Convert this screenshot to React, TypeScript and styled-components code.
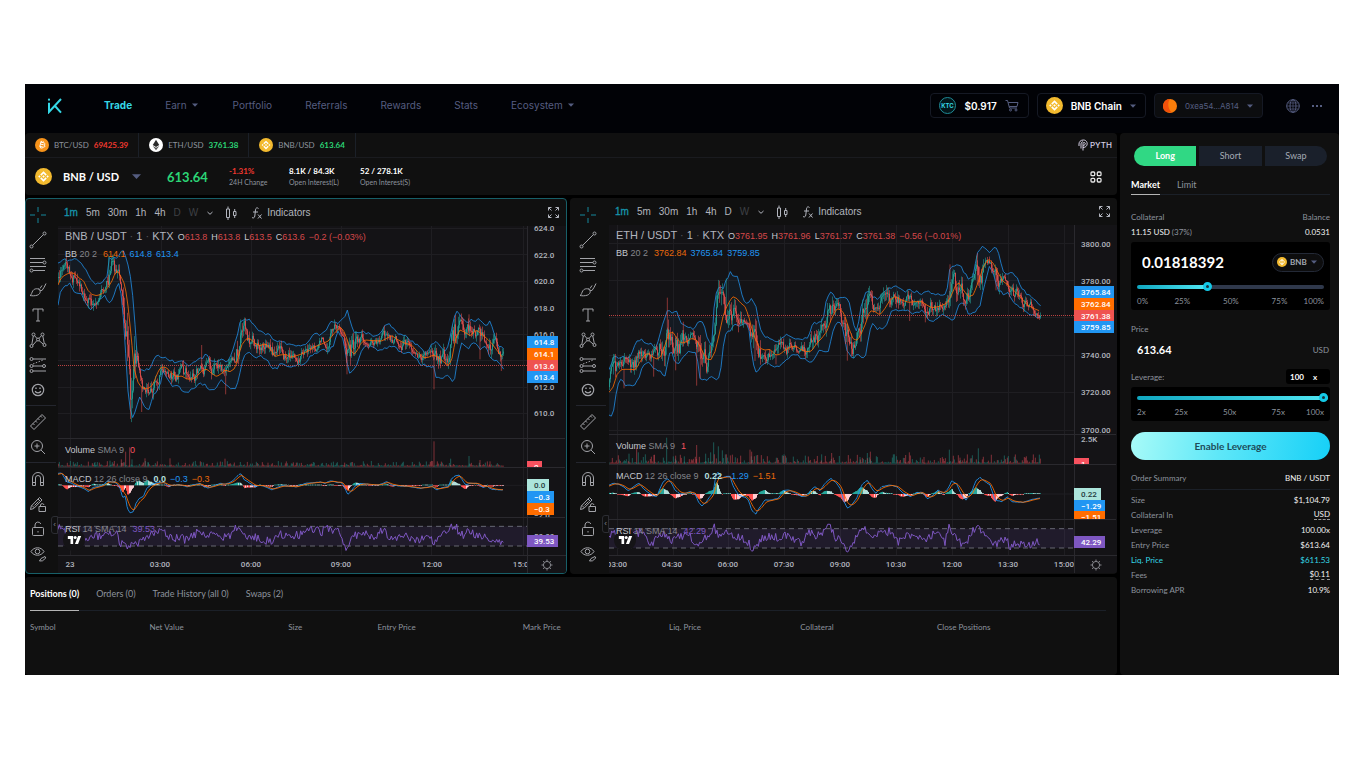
import React, { useState } from 'react';
import styled, { createGlobalStyle, css } from 'styled-components';

/* ---------- theme values ---------- */

const ui = "Lato, 'Open Sans', sans-serif";
const head = 'Inter, sans-serif';
const chartFont = "'Liberation Sans', Arial, sans-serif";
const axisFont = 'Roboto, sans-serif';

const c = {
  panel: '#101010',
  plot: '#141316',
  grid: '#1f1e22',
  line: '#2a292e',
  rule: '#1b2028',
  text: '#8d939d',
  green: '#2bd576',
  red: '#f0382f',
  up: '#26a69a',
  down: '#ef5350',
  blue: '#2196f3',
  orange: '#ff6d00',
  purple: '#7e57c2',
  mint: '#ace5dc',
  cyan: '#35d8e6',
  nav: '#555d80',
};

const GlobalStyle = createGlobalStyle`
  *, *::before, *::after { box-sizing: border-box; }
  body { margin: 0; background: #fff; }
  button, input, select { font: inherit; color: inherit; margin: 0; }
  button { background: none; border: 0; padding: 0; cursor: pointer; }
  svg { display: block; }
`;

/* ---------- series helpers ---------- */

type Pt = [number, number];

const seeded = (seed: number) => () => {
  seed = (seed + 0x6d2b79f5) | 0;
  let t = Math.imul(seed ^ (seed >>> 15), 1 | seed);
  t = (t + Math.imul(t ^ (t >>> 7), 61 | t)) ^ t;
  return ((t ^ (t >>> 14)) >>> 0) / 4294967296;
};

const pts = (dx: number, dy: number, s: string): Pt[] =>
  s.trim().split(/\s+/).map((p) => {
    const [x, y] = p.split(',').map(Number);
    return [x + dx, y + dy] as Pt;
  });

const at = (s: Pt[], x: number) => {
  if (x <= s[0][0]) return s[0][1];
  for (let i = 1; i < s.length; i++) {
    if (x <= s[i][0]) {
      const [x0, y0] = s[i - 1];
      const [x1, y1] = s[i];
      return x1 === x0 ? y1 : y0 + ((y1 - y0) * (x - x0)) / (x1 - x0);
    }
  }
  return s[s.length - 1][1];
};

const d = (s: Pt[]) => 'M' + s.map((p) => `${p[0].toFixed(1)} ${p[1].toFixed(1)}`).join('L');

const sample = (s: Pt[], end: number, noise = 0, seed = 1, step = 3): Pt[] => {
  const rnd = seeded(seed);
  const out: Pt[] = [];
  for (let x = 0; x <= end; x += step) out.push([x, at(s, x) + (rnd() - 0.5) * noise]);
  return out;
};

/* ---------- chart data ---------- */

type Tag = { y: number; h: number; w: number; text: string; fill: string; dark?: boolean };
type Pane = { top: number; height: number; labels: [number, string][]; tags: Tag[] };

interface ChartSpec {
  id: string;
  symbol: string;
  width: number;
  height: number;
  end: number;
  seed: number;
  gridX: number[];
  gridY: number[];
  priceY: number;
  mid: Pt[];
  upper: Pt[];
  lower: Pt[];
  spikes: [number, number][];
  volBase: number;
  volNoise: number;
  vols: [number, number, boolean][];
  zero: number;
  macd: Pt[];
  rsiBand: [number, number];
  rsi: Pt[];
  panes: Pane[];
  times: [number, string][];
  ohlc: [string, string][];
  change: string;
  bb: string[];
  vol: string;
  macdValues: string[];
  rsiValue: string;
  legendTops: number[];
  dayDim: boolean;
}

const bnb: ChartSpec = {
  id: 'bnb',
  symbol: 'BNB / USDT',
  width: 469,
  height: 329,
  end: 1337,
  seed: 11,
  gridX: [12, 103, 193, 283, 373, 465],
  gridY: [2, 28, 55, 81, 108, 134, 161, 187],
  priceY: 139,
  mid: [
    ...pts(-114, -93, '115,270 122,250 135,240 150,233 165,236 178,250 190,256 203,285 215,298 230,302 245,297 262,280 275,260 285,235 293,228 303,245 315,270 325,340 335,440 342,520 355,565 368,580 385,580 398,570 408,545 418,522 430,515 442,520 455,535 470,545 485,543 500,552 515,553 530,545 545,528 560,522 575,535 590,545 605,535 615,525 630,530 645,520 655,485 665,450 680,430 692,432 705,445 720,452 735,446 750,460 765,485 780,480 800,478'),
    ...pts(696, -93, '0,487 20,482 40,475 60,465 75,455 95,447 115,438 130,418 150,397 160,405 170,430 180,460 190,478 200,470 212,445 225,435 250,437 275,438 290,430 305,422 325,435 345,445 365,450 380,468 400,488 415,487 430,480 445,487 460,500 475,512 485,495 497,430 510,405 525,412 540,422 560,405 575,418 590,430 605,445 620,465 640,490'),
  ],
  upper: [
    ...pts(-114, -93, '115,205 130,193 145,196 160,192 180,200 195,222 210,248 220,265 235,262 250,262 265,235 268,190 285,190 300,185 307,155 315,180 325,215 335,265 342,340 348,440 355,520 370,525 390,520 400,500 412,475 425,490 440,488 460,500 475,500 490,500 500,512 515,510 530,495 545,490 560,475 572,495 585,500 600,490 620,498 635,480 650,430 660,380 670,370 685,372 700,385 715,410 735,415 750,420 765,440 780,435 800,445'),
    ...pts(696, -93, '0,450 15,455 35,455 55,440 75,415 90,420 110,400 122,378 140,382 155,380 165,360 173,346 180,380 190,410 205,415 220,410 240,418 265,425 280,400 292,387 310,395 325,415 345,418 365,440 385,448 400,470 415,470 425,445 440,440 455,455 465,468 475,450 485,400 495,360 505,348 515,370 530,385 540,375 555,375 575,375 585,392 600,380 610,405 620,445 630,455 641,463'),
  ],
  lower: [
    ...pts(-114, -93, '115,335 120,295 135,270 150,265 165,295 180,292 195,320 210,345 225,335 240,310 255,300 265,330 275,320 285,290 295,265 305,300 315,440 325,600 333,660 340,675 348,640 358,600 370,635 390,640 398,600 410,595 422,560 428,530 440,548 455,570 475,575 490,590 510,588 525,580 540,565 555,570 570,590 585,585 600,555 615,565 630,580 648,585 655,560 665,500 680,470 695,480 710,490 725,485 740,490 755,520 770,520 785,505 805,515'),
    ...pts(696, -93, '0,515 15,510 35,508 50,500 65,480 85,470 100,465 115,468 130,450 145,410 160,430 170,500 180,535 190,525 200,510 212,475 225,455 245,455 265,470 280,465 300,450 320,460 340,475 355,470 375,490 395,510 415,512 430,515 440,550 460,548 475,535 485,560 495,545 505,480 515,445 535,460 555,440 570,460 590,455 600,490 620,500 640,522'),
  ],
  spikes: [[152, 88], [251, 558], [431, 357], [503, 505], [548, 280], [867, 445], [1128, 490], [1233, 265], [1266, 400], [1330, 435]],
  volBase: 722,
  volNoise: 9,
  vols: [[111, 14, true], [156, 18, true], [190, 22, false], [203, 45, false], [215, 58, false], [222, 22, true], [261, 25, false], [270, 14, true], [336, 25, false], [501, 24, false], [630, 12, false], [826, 15, true], [860, 12, false], [1128, 76, false], [1178, 24, true], [1233, 32, true], [1266, 20, false], [1296, 16, false]],
  zero: 778,
  macd: [
    ...pts(-114, 582, '115,160 125,160 140,185 155,190 170,198 190,205 205,215 220,202 235,200 250,195 262,183 275,185 290,190 300,205 308,232 316,228 322,265 330,278 340,275 348,250 358,235 370,230 380,205 392,195 410,188 430,187 445,198 460,195 480,195 500,200 520,195 540,190 552,200 565,204 580,198 600,190 615,193 635,185 650,170 662,160 672,178 690,190 705,200 720,195 740,202 755,210 770,203 790,196'),
    ...pts(696, 582, '0,200 20,200 45,190 70,188 90,186 105,190 122,182 140,187 155,188 165,205 173,223 183,215 195,198 210,190 235,193 260,195 275,192 290,185 305,195 330,198 360,200 390,205 410,202 425,198 440,210 455,203 475,200 483,178 495,168 507,165 517,180 527,195 540,190 560,190 580,203 590,198 605,208 640,210'),
  ],
  rsiBand: [901, 960],
  rsi: [
    ...pts(-114, 582, '115,325 122,320 135,340 150,345 170,350 200,360 215,345 235,350 260,335 290,340 300,370 315,375 325,385 345,370 365,365 385,345 410,335 430,330 445,345 460,355 480,350 495,360 515,350 540,330 560,350 580,345 600,350 620,355 640,335 657,310 665,325 680,350 700,350 720,355 750,365 775,340 800,345'),
    ...pts(696, 582, '0,355 20,345 45,340 70,325 95,335 120,325 150,335 160,370 170,388 180,360 205,340 230,345 255,350 285,325 295,350 320,350 350,350 375,355 395,360 420,350 435,370 450,345 470,345 485,315 500,325 515,345 540,335 560,345 580,350 600,365 620,360 641,362'),
  ],
  panes: [
    {
      top: 0,
      height: 212,
      labels: [[2, '624.0'], [29, '622.0'], [55, '620.0'], [82, '618.0'], [108, '616.0'], [161, '612.0'], [187, '610.0']],
      tags: [
        { y: 110, h: 12, w: 31, text: '614.8', fill: c.blue },
        { y: 122, h: 12, w: 31, text: '614.1', fill: c.orange },
        { y: 134, h: 12, w: 31, text: '613.6', fill: c.down },
        { y: 145, h: 12, w: 31, text: '613.4', fill: c.blue },
      ],
    },
    { top: 212, height: 29, labels: [], tags: [{ y: 23, h: 12, w: 15, text: '0', fill: '#f7525f' }] },
    {
      top: 241,
      height: 50,
      labels: [[48, '−2.0']],
      tags: [
        { y: 12, h: 12, w: 22, text: '0.0', fill: c.mint, dark: true },
        { y: 24, h: 12, w: 27, text: '−0.3', fill: c.blue },
        { y: 36, h: 12, w: 27, text: '−0.3', fill: c.orange },
      ],
    },
    { top: 291, height: 38, labels: [[19, '50.00']], tags: [{ y: 18, h: 12, w: 31, text: '39.53', fill: c.purple }] },
  ],
  times: [[12, '23'], [102, '03:00'], [193, '06:00'], [283, '09:00'], [374, '12:00'], [465, '15:00']],
  ohlc: [['O', '613.8'], ['H', '613.8'], ['L', '613.5'], ['C', '613.6']],
  change: '−0.2 (−0.03%)',
  bb: ['614.1', '614.8', '613.4'],
  vol: '0',
  macdValues: ['0.0', '−0.3', '−0.3'],
  rsiValue: '39.53',
  legendTops: [4, 22, 218, 247, 297],
  dayDim: true,
};

const eth: ChartSpec = {
  id: 'eth',
  symbol: 'ETH / USDT',
  width: 465,
  height: 330,
  end: 1295,
  seed: 29,
  gridX: [8, 64, 119, 175, 231, 287, 343, 399, 455],
  gridY: [18, 55, 92, 130, 167, 205],
  priceY: 90,
  mid: [
    ...pts(-132, -90, '132,592 145,575 155,540 170,523 190,523 212,524 225,500 240,480 250,475 265,487 278,493 290,480 300,450 312,415 325,412 335,430 350,445 365,440 380,430 395,435 410,465 425,492 438,494 450,470 462,420 475,360 490,325 503,305 515,310 525,322 540,335 550,360 560,400 572,435 585,460 600,465 615,463 632,480 645,478 660,465 680,455 695,455 710,465 725,470 740,468 755,445 770,430 785,410 800,370 815,342'),
    ...pts(693, -90, '0,343 12,355 25,395 38,430 50,437 62,420 75,390 90,347 105,350 120,360 135,340 150,315 165,305 185,315 205,322 225,320 245,320 260,330 275,338 295,335 320,325 335,300 347,270 358,264 370,285 385,305 400,300 415,260 430,215 445,192 460,205 475,235 490,260 505,270 520,285 540,305 560,328 580,340 600,348'),
  ],
  upper: [
    ...pts(-132, -90, '132,520 145,488 160,487 175,483 195,488 210,450 222,433 240,440 260,447 275,458 290,400 300,370 308,340 320,360 332,345 345,380 360,395 375,400 390,400 405,375 418,390 430,440 440,450 448,320 458,275 475,280 485,250 497,230 505,243 515,240 525,270 535,315 545,325 560,310 570,325 580,370 590,415 600,430 620,430 640,440 655,425 670,420 690,430 715,435 730,425 742,385 760,385 775,370 785,310 800,290 812,310'),
    ...pts(693, -90, '0,310 20,305 28,320 40,385 52,410 62,340 75,295 85,285 100,310 115,310 130,290 150,280 175,275 190,290 205,285 225,290 245,295 262,285 280,300 295,300 320,300 330,215 345,208 360,210 375,235 390,255 400,240 412,175 425,157 440,165 450,170 467,153 475,175 485,215 495,240 510,235 530,240 540,275 560,295 575,308 590,320 600,335'),
  ],
  lower: [
    ...pts(-132, -90, '132,660 145,658 152,600 165,550 180,568 205,572 220,555 232,510 245,500 260,510 270,525 285,530 300,545 308,500 318,460 330,505 345,500 360,480 380,465 395,480 405,550 420,555 435,550 445,545 455,560 465,540 475,450 485,410 497,410 505,385 520,393 535,385 550,390 560,470 570,535 580,530 595,505 610,503 625,512 645,515 660,500 675,483 690,480 715,490 730,505 745,500 760,470 775,465 790,470 800,420 815,385'),
    ...pts(693, -90, '0,385 10,400 20,470 30,480 40,490 52,475 65,490 78,480 85,430 95,385 110,400 130,405 142,390 155,345 175,350 195,345 215,355 235,355 250,345 262,375 290,375 305,355 320,360 332,378 345,370 355,330 370,320 385,355 405,355 420,330 435,260 447,215 460,240 475,285 490,295 505,290 520,325 540,335 560,350 580,362 590,370 602,367'),
  ],
  spikes: [[45, 490], [134, 455], [175, 218], [200, 436], [223, 290], [263, 482], [274, 460], [352, 160], [438, 408], [501, 418], [715, 407], [776, 205], [902, 288], [949, 292], [1023, 118], [1105, 85], [1161, 196]],
  volBase: 716,
  volNoise: 16,
  vols: [[60, 30, true], [83, 48, false], [88, 34, true], [135, 26, false], [173, 78, true], [200, 24, false], [226, 22, true], [263, 56, false], [290, 30, true], [305, 34, true], [314, 64, true], [328, 52, true], [340, 40, true], [352, 28, false], [395, 24, false], [423, 42, false], [428, 36, false], [446, 26, false], [525, 28, true], [638, 28, true], [668, 32, false], [753, 20, true], [775, 32, true], [784, 36, false], [890, 26, false], [901, 34, false], [945, 20, false], [1021, 42, true], [1053, 18, false], [1108, 46, true], [1195, 18, false]],
  zero: 807,
  macd: [
    ...pts(-132, 585, '132,195 145,190 160,192 175,200 190,212 205,200 222,190 235,205 250,218 265,228 275,230 285,205 295,185 307,175 320,190 330,210 345,222 360,220 375,215 390,222 400,245 410,258 420,250 435,230 445,215 452,170 458,155 470,175 480,170 495,170 505,200 520,225 540,232 550,240 560,270 572,283 582,265 600,240 620,240 640,235 655,212 670,210 690,218 710,230 725,228 738,210 750,200 765,212 780,190 798,175 815,190'),
    ...pts(693, 585, '0,205 12,245 22,265 35,255 50,235 65,195 82,180 95,205 107,220 125,200 150,195 170,200 190,220 212,230 230,218 248,217 262,237 280,225 293,210 310,220 325,205 335,182 350,192 365,225 378,240 395,215 408,182 420,172 435,185 450,195 465,240 485,245 502,230 515,245 550,247 570,240 600,234'),
  ],
  rsiBand: [911, 969],
  rsi: [
    ...pts(-132, 585, '132,345 150,340 180,345 205,345 230,335 250,360 262,370 270,350 295,335 305,350 320,360 345,350 375,350 395,370 405,375 420,355 440,345 446,320 460,345 490,330 505,350 530,355 550,365 560,385 572,388 585,355 605,350 625,355 640,350 665,345 680,360 710,370 735,335 745,350 765,345 785,325 800,325 810,350'),
    ...pts(693, 585, '0,355 10,380 20,395 35,370 50,350 60,330 85,330 100,360 120,340 150,335 160,345 175,370 195,345 215,355 235,350 255,370 275,345 300,345 315,365 327,315 340,345 355,365 378,370 390,340 415,325 430,335 447,345 460,375 480,365 500,360 510,380 530,370 560,375 580,372 600,362'),
  ],
  panes: [
    {
      top: 0,
      height: 209,
      labels: [[19, '3800.00'], [56, '3780.00'], [130, '3740.00'], [167, '3720.00'], [205, '3700.00']],
      tags: [
        { y: 61, h: 12, w: 40, text: '3765.84', fill: c.blue },
        { y: 73, h: 12, w: 40, text: '3762.84', fill: c.orange },
        { y: 85, h: 12, w: 40, text: '3761.38', fill: c.down },
        { y: 96, h: 12, w: 40, text: '3759.85', fill: c.blue },
      ],
    },
    { top: 209, height: 30, labels: [[5, '2.5K']], tags: [{ y: 24, h: 12, w: 15, text: '1', fill: '#f7525f' }] },
    {
      top: 239,
      height: 55,
      labels: [],
      tags: [
        { y: 24, h: 12, w: 27, text: '0.22', fill: c.mint, dark: true },
        { y: 36, h: 12, w: 31, text: '−1.29', fill: c.blue },
        { y: 47, h: 12, w: 31, text: '−1.51', fill: c.orange },
      ],
    },
    { top: 294, height: 36, labels: [], tags: [{ y: 17, h: 12, w: 31, text: '42.29', fill: c.purple }] },
  ],
  times: [[8, '03:00'], [63, '04:30'], [119, '06:00'], [175, '07:30'], [231, '09:00'], [287, '10:30'], [343, '12:00'], [399, '13:30'], [455, '15:00']],
  ohlc: [['O', '3761.95'], ['H', '3761.96'], ['L', '3761.37'], ['C', '3761.38']],
  change: '−0.56 (−0.01%)',
  bb: ['3762.84', '3765.84', '3759.85'],
  vol: '1',
  macdValues: ['0.22', '−1.29', '−1.51'],
  rsiValue: '42.29',
  legendTops: [4, 22, 215, 245, 300],
  dayDim: false,
};

/* ---------- plot drawing ---------- */

const buildPlot = (s: ChartSpec) => {
  const rnd = seeded(s.seed);
  const wick = { up: '', down: '' };
  const body = { up: '', down: '' };
  let prev = at(s.mid, 12);
  let drift = 0;
  for (let x = 0; x <= s.end; x += 3) {
    const top = at(s.upper, x);
    const low = at(s.lower, x);
    const band = low - top;
    drift = drift * 0.8 + (rnd() - 0.5) * band * 0.46;
    let close = at(s.mid, Math.min(x + 14, s.end)) + drift;
    close = Math.max(top + band * 0.06, Math.min(low - band * 0.06, close));
    const key = close <= prev ? 'up' : 'down';
    const y0 = Math.min(close, prev);
    const y1 = Math.max(close, prev, y0 + 3);
    const reach = 7 + band * 0.15;
    wick[key] += `M${x + 1.5} ${(y0 - rnd() * reach).toFixed(1)}V${(y1 + rnd() * reach).toFixed(1)}`;
    body[key] += `M${x + 1.5} ${y0.toFixed(1)}V${y1.toFixed(1)}`;
    prev = close;
  }
  s.spikes.forEach(([x, y]) => {
    const m = at(s.mid, x);
    wick[y < m ? (x % 2 ? 'down' : 'up') : 'down'] += `M${x} ${m}V${y}`;
  });

  const vol = { up: '', down: '' };
  for (let x = 0; x <= s.end; x += 3) {
    const h = 3 + Math.pow(rnd(), 4) * s.volNoise * 1.6;
    vol[rnd() > 0.5 ? 'up' : 'down'] += `M${x + 1} ${s.volBase}v${-h.toFixed(1)}`;
  }
  s.vols.forEach(([x, h, up]) => {
    vol[up ? 'up' : 'down'] += `M${x} ${s.volBase}v${-h}`;
  });

  const macd = sample(s.macd, s.end, 1.5, s.seed + 2);
  let sig = macd[0][1] + 4;
  let before = 0;
  const hist = ['', '', '', ''];
  const signal = macd.map(([x, y]) => {
    sig += (y - sig) * 0.26;
    const h = (y - sig) * 1.1;
    const k = h < 0 ? (h < before ? 0 : 1) : h > before ? 2 : 3;
    hist[k] += `M${x + 1.5} ${s.zero}v${(Math.abs(h) < 2 ? Math.sign(h || 1) * 2 : h).toFixed(1)}`;
    before = h;
    return [x, sig] as Pt;
  });

  return { wick, body, vol, macd, signal, hist, rsi: sample(s.rsi, s.end, 26, s.seed + 5, 4) };
};

const histColors = ['#26a69a', '#b2dfdb', '#ff5252', '#ffcdd2'];

const Plot = ({ spec: s }: { spec: ChartSpec }) => {
  const p = React.useMemo(() => buildPlot(s), [s]);
  const W = s.width * 3;
  const H = s.height * 3;
  const up = sample(s.upper, s.end, 9, s.seed + 7, 7);
  const lo = sample(s.lower, s.end, 9, s.seed + 8, 7);
  return (
    <PlotSvg viewBox={`0 0 ${W} ${H}`} preserveAspectRatio="none" $height={s.height} aria-label={`${s.symbol} chart`}>
      <g stroke={c.grid} strokeWidth={3} fill="none">
        <path d={s.gridX.map((x) => `M${x * 3 + 1.5} 0V${H}`).join('')} />
        <path d={s.gridY.map((y) => `M0 ${y * 3 + 1.5}H${W}`).join('')} />
        <path d={`M0 ${s.zero}H${W}`} />
      </g>
      <path d={s.panes.slice(1).map((q) => `M0 ${q.top * 3 + 1.5}H${W}`).join('')} stroke={c.line} strokeWidth={3} />

      <path d={d(up) + 'L' + d([...lo].reverse()).slice(1) + 'Z'} fill={c.blue} fillOpacity={0.06} />
      <g fill="none" strokeWidth={3} strokeLinejoin="round">
        <path d={d(up)} stroke={c.blue} strokeOpacity={0.75} />
        <path d={d(lo)} stroke={c.blue} strokeOpacity={0.75} />
      </g>
      <g fill="none" strokeWidth={2} strokeOpacity={0.8}>
        <path d={p.wick.up} stroke={c.up} />
        <path d={p.wick.down} stroke={c.down} />
      </g>
      <g fill="none" strokeWidth={3} strokeOpacity={0.75}>
        <path d={p.body.up} stroke={c.up} />
        <path d={p.body.down} stroke={c.down} />
      </g>
      <path d={d(sample(s.mid, s.end, 0, 1, 6))} fill="none" stroke={c.orange} strokeWidth={3} strokeOpacity={0.8} />
      <path d={`M0 ${s.priceY * 3 + 1.5}H${W}`} stroke={c.down} strokeWidth={3} strokeDasharray="3 3" strokeOpacity={0.75} />

      <g fill="none" strokeWidth={2.4} strokeOpacity={0.6}>
        <path d={p.vol.up} stroke={c.up} />
        <path d={p.vol.down} stroke="#f7525f" />
      </g>

      {p.hist.map((h, i) => (
        <path key={i} d={h} stroke={histColors[i]} strokeWidth={3} />
      ))}
      <path d={d(p.macd)} fill="none" stroke={c.blue} strokeWidth={3} strokeOpacity={0.85} />
      <path d={d(p.signal)} fill="none" stroke={c.orange} strokeWidth={3} strokeOpacity={0.85} />

      <rect x={0} y={s.rsiBand[0]} width={W} height={s.rsiBand[1] - s.rsiBand[0]} fill={c.purple} fillOpacity={0.12} />
      <path
        d={s.rsiBand.map((y) => `M0 ${y}H${W}`).join('')}
        stroke="#787b86"
        strokeWidth={3}
        strokeDasharray="15 12"
        strokeOpacity={0.8}
      />
      <path d={d(p.rsi)} fill="none" stroke={c.purple} strokeWidth={3} />
    </PlotSvg>
  );
};

const PriceAxis = ({ spec: s }: { spec: ChartSpec }) => (
  <AxisSvg width="100%" height={s.height}>
    {s.panes.map((p) => (
      <svg key={p.top} x={0} y={p.top} width="100%" height={p.height}>
        {p.top > 0 && <rect width="100%" height={1} fill={c.line} />}
        {p.labels.map(([y, t]) => (
          <text key={t} x={7} y={y + 3} fill="#b2b5be">{t}</text>
        ))}
        {p.tags.map((t) => (
          <g key={t.y}>
            <rect x={0} y={t.y} width={t.w} height={t.h} fill={t.fill} />
            <text x={7} y={t.y + 9} fill={t.dark ? '#23393a' : '#fff'}>{t.text}</text>
          </g>
        ))}
      </svg>
    ))}
  </AxisSvg>
);

const TimeAxis = ({ spec: s }: { spec: ChartSpec }) => (
  <TimeSvg width="100%" height={17}>
    {s.times.map(([x, t]) => (
      <text key={t} x={`${(x / s.width) * 100}%`} y={11} textAnchor="middle" fill="#b2b5be">{t}</text>
    ))}
  </TimeSvg>
);

/* ---------- icons ---------- */

const Coin = ({ kind, size }: { kind: 'btc' | 'eth' | 'bnb'; size: number }) => (
  <svg width={size} height={size} viewBox="0 0 32 32" aria-hidden="true">
    <circle cx={16} cy={16} r={16} fill={kind === 'btc' ? '#f7931a' : kind === 'eth' ? '#fff' : '#f3ba2f'} />
    {kind === 'btc' && (
      <path
        d="M12 9l8 2c4 1 3.500 5 0 4.600 4 1 3.200 6-1 5.400l-8.500-2M13.500 9.500l-2.500 10M13 14l6 1.500M15.500 6.500l-.8 3.200M19 7.500l-.8 3.200M12.800 20l-.8 3.500M16.300 21l-.8 3.500"
        fill="none"
        stroke="#fff"
        strokeWidth={2.2}
      />
    )}
    {kind === 'eth' && (
      <g fill="#2b2b2b">
        <path d="M16 4l7.500 12.200L16 20.600l-7.500-4.400z" />
        <path d="M8.500 18l7.500 4.400 7.500-4.400L16 28z" fill="#555" />
      </g>
    )}
    {kind === 'bnb' && (
      <g fill="#fff">
        <path d="M12.100 14.400L16 10.500l3.900 3.900 2.300-2.300L16 6l-6.200 6.200zM6 16l2.300-2.300L10.500 16l-2.200 2.300zM12.100 17.600L16 21.500l3.900-3.900 2.300 2.200L16 26l-6.200-6.100zM21.500 16l2.200-2.300L26 16l-2.300 2.300z" />
        <path d="M18.300 16L16 13.700 13.700 16l2.300 2.300z" />
      </g>
    )}
  </svg>
);

const Caret = ({ size = 6, color = c.nav }: { size?: number; color?: string }) => (
  <svg width={size} height={size} viewBox="0 0 6 6" aria-hidden="true">
    <path d="M0 1.500h6L3 4.700z" fill={color} />
  </svg>
);

const toolIcons: Record<string, React.ReactNode> = {
  Cross: <path d="M9 1v5M9 12v5M1 9h5M12 9h5" stroke="#14889d" />,
  'Trend line': (
    <>
      <circle cx="2.500" cy="15.500" r="1.500" />
      <circle cx="15.500" cy="2.500" r="1.500" />
      <path d="M3.600 14.400L14.400 3.600" />
    </>
  ),
  'Fib retracement': (
    <>
      <path d="M1 2.500h15M1 6.500h13M1 10.500h16M4 14.500h12" />
      <circle cx="15.500" cy="6.500" r="1.500" />
      <circle cx="2.500" cy="14.500" r="1.500" />
    </>
  ),
  Brush: (
    <>
      <path d="M1 14.500c1.800-.5 1.500-3 3-5 1.800-2.300 5.500-2.300 6.800-.3 1.200 2-.3 4.300-2.600 5-2.200.7-5 .8-7.200.3z" />
      <path d="M9.500 7.500c.8 1.500 2 2.200 3.500 2C14.500 7.500 16 5 17 2.500M11 7.500L13 4.500" />
    </>
  ),
  Text: <path d="M4 5.500V3h10v2.500M9 3v12M7 15h4" />,
  Pattern: (
    <>
      <circle cx="2.500" cy="15" r="1.500" />
      <circle cx="4.500" cy="3.500" r="1.500" />
      <circle cx="9" cy="8.500" r="1.500" />
      <circle cx="13.500" cy="3.500" r="1.500" />
      <circle cx="15.500" cy="14" r="1.500" />
      <path d="M2.800 13.500L4.300 5M5.500 4.600L8 7.500M10 7.500l2.500-3M13.800 5l1.500 7.500M3.800 14.200L8 9.500M10 9.600l4.300 3.600" />
    </>
  ),
  Forecast: (
    <>
      <circle cx="2.500" cy="3" r="1.500" />
      <circle cx="2.500" cy="10" r="1.500" />
      <circle cx="2.500" cy="15" r="1.500" />
      <circle cx="15" cy="10" r="1.500" />
      <path d="M4 3h13M4 10h9.500M4 15h13" />
      <path d="M4 8l10-4" strokeDasharray="1.500 1.500" />
    </>
  ),
  Emoji: (
    <>
      <circle cx="9" cy="9" r="5.700" strokeWidth="1.200" />
      <path d="M6.200 10c.6 2.600 5 2.600 5.600 0" strokeWidth="1.200" />
      <path d="M7 6.500v1.500M11 6.500v1.500" strokeWidth="1.400" />
    </>
  ),
  Measure: (
    <>
      <path d="M1.500 13L13 1.500l3.500 3.500L5 16.500z" />
      <path d="M4 10.500l1.500 1.500M6.500 8l1.500 1.500M9 5.500l1.500 1.500M11.500 3L13 4.500" />
    </>
  ),
  'Zoom in': (
    <>
      <circle cx="8" cy="8" r="5.500" />
      <path d="M12 12l4 4M5.500 8h5M8 5.500v5" />
    </>
  ),
  Magnet: (
    <>
      <path d="M3.500 15.500V8a5.500 5.500 0 0111 0v7.500h-3V8a2.500 2.500 0 00-5 0v7.500z" />
      <path d="M3.500 12.500h3M11.500 12.500h3" />
    </>
  ),
  'Stay in drawing mode': (
    <>
      <path d="M1.500 14.500l.8-3.500L10.500 2.500l2.500 2.500-8.200 8.500zM3 10.500l2.500 2.500M9 4l2.500 2.500M5.500 10.500l4-4" />
      <path d="M10 11.500h6.500v5H10zM11.500 11.500V10a1.800 1.800 0 013.500 0" />
    </>
  ),
  Lock: (
    <>
      <rect x="3.500" y="7.500" width="11" height="8" rx="1" />
      <path d="M6 7.500V5a3 3 0 015.800-1M9 11v1.500" />
    </>
  ),
  'Hide drawings': (
    <>
      <path d="M2 6.500C5 1.500 12 1.500 15 6.500c-3 5-10 5-13 0z" />
      <circle cx="8.500" cy="6.500" r="2.300" />
      <path d="M10.500 16l1.500-2.500 4-2 .8 1.500-3.300 2.800z" />
    </>
  ),
};

const toolGroups = [
  ['Cross', 'Trend line', 'Fib retracement', 'Brush', 'Text', 'Pattern', 'Forecast', 'Emoji'],
  ['Measure', 'Zoom in'],
  ['Magnet', 'Stay in drawing mode', 'Lock', 'Hide drawings'],
];

/* ---------- page frame ---------- */

const Page = styled.div`
  padding: 84px 11px 84px 25px;
  background: #fff;
`;

const Shell = styled.main`
  background: #000;
  font-family: ${ui};
  font-size: 8px;
  line-height: 12px;
  color: ${c.text};
`;

const Header = styled.header`
  display: flex;
  align-items: center;
  padding: 9px 14px 15px 22px;
  background: #010206;
  font-family: ${head};
  font-size: 10px;
  color: ${c.nav};
`;

const Nav = styled.nav`
  display: flex;
  align-items: center;
  gap: 33px;
  margin-left: 42px;
  padding-bottom: 2px;
`;

const NavLink = styled.a<{ $active?: boolean; $menu?: boolean }>`
  display: flex;
  align-items: center;
  gap: 5px;
  padding-right: ${(p) => (p.$menu ? 2 : 0)}px;
  color: ${(p) => (p.$active ? c.cyan : c.nav)};
  font-weight: ${(p) => (p.$active ? 700 : 400)};
  text-decoration: none;
`;

const HeaderTools = styled.div`
  display: flex;
  align-items: center;
  gap: 8px;
  margin-left: auto;
`;

const Chip = styled.button<{ $muted?: boolean }>`
  display: flex;
  align-items: center;
  gap: 8px;
  height: 25px;
  padding: 0 9px 0 8px;
  border: 1px solid #151924;
  border-radius: 4px;
  background: ${(p) => (p.$muted ? '#0c0d0f' : 'transparent')};
  color: ${(p) => (p.$muted ? c.nav : '#fff')};
  font-size: ${(p) => (p.$muted ? 8 : 10)}px;
  font-weight: ${(p) => (p.$muted ? 400 : 600)};
`;

const IconButton = styled.button`
  display: grid;
  place-items: center;
  width: 16px;
  height: 16px;
`;

const GlobeButton = styled(IconButton)`
  margin-left: 14px;
`;

const Body = styled.div`
  display: grid;
  grid-template-columns: minmax(0, 1fr) 219px;
  gap: 3px;
`;

const Column = styled.div`
  display: flex;
  flex-direction: column;
  gap: 3px;
  min-width: 0;
`;

const Panel = styled.section`
  background: ${c.panel};
  border-radius: 4px;
`;

/* ---------- market bar ---------- */

const TickerRow = styled.div`
  display: flex;
  align-items: stretch;
  height: 25px;
  border-bottom: 1px solid #1a1b1f;
`;

const Ticker = styled.a`
  display: flex;
  align-items: center;
  gap: 5px;
  padding: 0 10px;
  border-right: 1px solid ${c.rule};
  color: ${c.text};
  text-decoration: none;
`;

const Price = styled.b<{ $down?: boolean }>`
  color: ${(p) => (p.$down ? c.red : c.green)};
`;

const Pyth = styled.span`
  display: flex;
  align-items: center;
  gap: 2px;
  margin: 0 5px 0 auto;
  font: 500 8px/12px ${head};
  color: #d6cfe6;
`;

const MarketRow = styled.div`
  display: flex;
  align-items: center;
  height: 37px;
  padding: 0 15px 0 10px;
`;

const Pair = styled.button`
  display: flex;
  align-items: center;
  gap: 11px;
  font-size: 11px;
  font-weight: 700;
  color: #fff;
`;

const PairName = styled.span`
  margin-right: 2px;
`;

const LastPrice = styled.span`
  width: 62px;
  margin-left: 26px;
  font-size: 13px;
  font-weight: 700;
  color: ${c.green};
`;

const Stat = styled.div<{ $width: number }>`
  display: flex;
  flex-direction: column;
  width: ${(p) => p.$width}px;
  font-size: 7px;
  line-height: 11px;
`;

const StatValue = styled.b<{ $down?: boolean }>`
  font-size: 8px;
  color: ${(p) => (p.$down ? c.red : '#fff')};
`;

const LayoutButton = styled(IconButton)`
  width: 12px;
  margin-left: auto;
`;

/* ---------- charts ---------- */

const Charts = styled.div`
  display: grid;
  grid-template-columns: minmax(0, 542fr) minmax(0, 547fr);
  gap: 3px;
`;

const ChartPanel = styled(Panel)<{ $active?: boolean }>`
  display: grid;
  grid-template-columns: 32px minmax(0, 1fr) 39px;
  overflow: hidden;
  font-family: ${chartFont};
  ${(p) =>
    p.$active
      ? css`
          border: 1px solid #175f68;
        `
      : css`
          grid-template-columns: 39px minmax(0, 1fr) 43px;
        `}
`;

const Tools = styled.div<{ $inset: number }>`
  display: flex;
  flex-direction: column;
  padding: ${(p) => (p.$inset ? 4 : 3)}px 7px 0 ${(p) => p.$inset}px;
`;

const Tool = styled.button`
  display: grid;
  place-items: center;
  width: 24px;
  height: 25px;
`;

const ToolRule = styled.hr`
  width: 30px;
  margin: 3px 0;
  border: 0;
  border-top: 1px solid #24262e;
`;

const ChartMain = styled.div`
  grid-column: 2 / 4;
  display: grid;
  grid-template-columns: minmax(0, 1fr) auto;
  grid-template-rows: auto auto 1fr;
  min-width: 0;
`;

const ChartToolbar = styled.div`
  grid-column: 1 / 3;
  display: flex;
  align-items: center;
  height: 27px;
  padding: 0 6px 0 6px;
  font-size: 10px;
  color: #b2b5be;
`;

const Frame = styled.button<{ $state?: 'active' | 'dim' }>`
  margin-right: 8px;
  color: ${(p) => (p.$state === 'active' ? '#1695ac' : p.$state === 'dim' ? '#3f4045' : '#b2b5be')};
  -webkit-text-stroke: ${(p) => (p.$state === 'active' ? '0.3px' : '0')};
`;

const ToolbarButton = styled.button<{ $gap?: number }>`
  display: flex;
  align-items: center;
  gap: 4px;
  margin-right: ${(p) => p.$gap ?? 0}px;
`;

const FullscreenButton = styled.button`
  margin-left: auto;
`;

const PlotArea = styled.div`
  position: relative;
  min-width: 0;
  background: ${c.plot};
`;

const PlotSvg = styled.svg<{ $height: number }>`
  width: 100%;
  height: ${(p) => p.$height}px;
`;

const AxisArea = styled.div<{ $width: number }>`
  width: ${(p) => p.$width}px;
  background: ${c.plot};
  border-left: 1px solid ${c.line};
`;

const AxisSvg = styled.svg`
  font: 500 8px ${axisFont};
  margin-left: -1px;
`;

const TimeArea = styled.div`
  height: 18px;
  min-width: 0;
  background: ${c.plot};
  border-top: 1px solid ${c.line};
`;

const Corner = styled(TimeArea)`
  display: grid;
  place-items: center;
  border-left: 1px solid ${c.line};
`;

const TimeSvg = styled.svg`
  font: 500 8px ${axisFont};
`;

const Legend = styled.div<{ $top: number }>`
  position: absolute;
  top: ${(p) => p.$top}px;
  left: 7px;
  display: flex;
  align-items: baseline;
  gap: 4px;
  font-size: 9px;
  line-height: 13px;
  color: #85868c;
  white-space: nowrap;
`;

const LegendTitle = styled.span`
  font-size: 11px;
  color: #b2b5be;
`;

const Dot = styled.span`
  color: #55565c;
`;

const LegendName = styled.span`
  color: #c5c7ce;
`;

const Value = styled.span<{ $color: string }>`
  color: ${(p) => p.$color};
`;

const ValueRow = styled.span`
  display: inline-flex;
  gap: 4px;
  margin-left: 2px;
`;

const TvBadge = styled.div<{ $top: number }>`
  position: absolute;
  top: ${(p) => p.$top}px;
  left: 5px;
  display: grid;
  place-items: center;
  width: 22px;
  height: 22px;
  border-radius: 50%;
  background: #151417;
`;

const Collapse = styled.button`
  position: absolute;
  top: 290px;
  left: -7px;
  width: 7px;
  height: 18px;
  border: 1px solid #2c2d33;
  border-radius: 3px 0 0 3px;
  background: ${c.panel};
  font-size: 8px;
  line-height: 8px;
  color: #85868c;
`;

/* ---------- positions ---------- */

const PositionsPanel = styled(Panel)`
  height: 98px;
  padding: 8px 11px 0 5px;
`;

const TabBar = styled.div<{ $gap: number }>`
  display: flex;
  gap: ${(p) => p.$gap}px;
  border-bottom: 1px solid ${c.rule};
`;

const Tab = styled.button<{ $active?: boolean; $tall?: boolean }>`
  height: ${(p) => (p.$tall ? 26 : 19)}px;
  margin-bottom: -1px;
  padding-bottom: ${(p) => (p.$tall ? 7 : 0)}px;
  border-bottom: 1px solid ${(p) => (p.$active ? '#b5b5b5' : 'transparent')};
  font-size: 9px;
  font-weight: ${(p) => (p.$active ? 700 : 400)};
  color: ${(p) => (p.$active ? '#fff' : c.text)};
`;

const Table = styled.table`
  width: 100%;
  border-collapse: collapse;
  table-layout: fixed;
`;

const Th = styled.th<{ $w?: number }>`
  width: ${(p) => (p.$w ? `${p.$w}%` : 'auto')};
  padding: 10px 0;
  font-weight: 400;
  text-align: left;
`;

/* ---------- order form ---------- */

const OrderPanel = styled(Panel)`
  padding: 13px 9px 0 11px;
`;

const Sides = styled.div`
  display: grid;
  grid-template-columns: repeat(3, 1fr);
  gap: 3px;
  margin: 0 3px 0 3px;
  border-radius: 10px;
  overflow: hidden;
`;

const Side = styled.button<{ $active?: boolean }>`
  height: 20px;
  background: ${(p) => (p.$active ? '#30d884' : '#1a202b')};
  font-size: 9px;
  font-weight: ${(p) => (p.$active ? 700 : 400)};
  color: ${(p) => (p.$active ? '#fff' : '#a4aab4')};
`;

const OrderTabs = styled.div`
  margin: 10px 0 14px;
`;

const Row = styled.div`
  display: flex;
  align-items: center;
  justify-content: space-between;
  height: 15px;
`;

const White = styled.span<{ $dotted?: boolean }>`
  color: #f1f1f1;
  border-bottom: ${(p) => (p.$dotted ? '1px dashed #9a9a9a' : '0')};
  line-height: ${(p) => (p.$dotted ? 10 : 12)}px;
`;

const Box = styled.div`
  margin-top: 3px;
  padding: 10px 6px 3px;
  border-radius: 3px;
  background: #000;
`;

const AmountRow = styled.div`
  display: flex;
  align-items: center;
  justify-content: space-between;
  height: 20px;
  margin-bottom: 10px;
  padding-left: 5px;
`;

const AmountInput = styled.input`
  width: 110px;
  min-width: 0;
  padding: 0;
  border: 0;
  background: none;
  font-size: 15px;
  font-weight: 700;
  color: #fff;
`;

const TokenPicker = styled.label`
  display: flex;
  align-items: center;
  gap: 3px;
  height: 19px;
  padding: 0 6px 0 4px;
  border: 1px solid #232936;
  border-radius: 10px;
  background: #0d0d0e;
  color: #a4aab4;
`;

const TokenSelect = styled.select`
  width: 18px;
  padding: 0;
  border: 0;
  appearance: none;
  background: none;
  font-weight: 700;
`;

const Range = styled.input<{ $fill: number }>`
  display: block;
  width: 100%;
  height: 9px;
  margin: 0;
  appearance: none;
  background: none;
  &::-webkit-slider-runnable-track {
    height: 4px;
    border-radius: 2px;
    background: linear-gradient(90deg, #10a7c0, #4fe6f2) 0 0 / ${(p) => p.$fill}% 100% no-repeat, #2f384b;
  }
  &::-webkit-slider-thumb {
    appearance: none;
    width: 9px;
    height: 9px;
    margin-top: -3px;
    border: 3px solid #14c9e6;
    border-radius: 50%;
    background: #17303c;
  }
`;

const Ticks = styled.div`
  display: grid;
  grid-template-columns: 20% 26% 26% 17% 11%;
  margin-top: 4px;
  span:last-child { text-align: right; }
`;

const PriceLabel = styled(Row)`
  margin-top: 11px;
`;

const PriceRow = styled(Row)`
  height: 27px;
  padding: 0 1px 0 6px;
`;

const PriceInput = styled(AmountInput)`
  font-size: 11px;
`;

const LeverageRow = styled(Row)`
  margin-top: 6px;
`;

const LeverageBox = styled.label`
  display: flex;
  align-items: center;
  gap: 7px;
  width: 44px;
  height: 15px;
  padding-left: 4px;
  border-radius: 3px;
  background: #000;
  font-weight: 700;
  color: #fff;
`;

const LeverageInput = styled.input`
  width: 16px;
  padding: 0;
  border: 0;
  background: none;
`;

const LeverageSlider = styled(Box)`
  padding: 6px 6px 3px;
`;

const LeverageRange = styled(Range)`
  width: calc(100% + 4px);
`;

const Submit = styled.button`
  width: 100%;
  height: 28px;
  margin-top: 11px;
  border-radius: 14px;
  background: linear-gradient(100deg, #a8fbf8 0%, #5ee7f8 45%, #16d0f7 100%);
  font-size: 10px;
  font-weight: 700;
  color: #1d4c5a;
`;

const SummaryHead = styled(Row)`
  height: 19px;
  margin: 11px 0 2px;
  border-bottom: 1px solid ${c.rule};
  padding-bottom: 4px;
`;

const SummaryRow = styled(Row)<{ $accent?: boolean }>`
  color: ${(p) => (p.$accent ? c.cyan : c.text)};
  ${White} {
    ${(p) => p.$accent && `color: ${c.cyan};`}
  }
`;

/* ---------- components ---------- */

const Chart = ({ spec: s, active }: { spec: ChartSpec; active?: boolean }) => {
  const [t0, t1, t2, t3, t4] = s.legendTops;
  return (
    <ChartPanel $active={active}>
      <Tools $inset={active ? 0 : 6}>
        {toolGroups.map((group, i) => (
          <React.Fragment key={i}>
            {i > 0 && <ToolRule />}
            {group.map((name) => (
              <Tool key={name} aria-label={name}>
                <svg width={18} height={18} viewBox="0 0 18 18" fill="none" stroke="#a3a4a9" strokeWidth={1}>
                  {toolIcons[name]}
                </svg>
              </Tool>
            ))}
          </React.Fragment>
        ))}
      </Tools>
      <ChartMain>
        <ChartToolbar>
          <Frame $state="active">1m</Frame>
          <Frame>5m</Frame>
          <Frame>30m</Frame>
          <Frame>1h</Frame>
          <Frame>4h</Frame>
          <Frame $state={s.dayDim ? 'dim' : undefined}>D</Frame>
          <Frame $state="dim">W</Frame>
          <ToolbarButton $gap={11} aria-label="More intervals">
            <svg width={8} height={8} viewBox="0 0 8 8" fill="none" stroke="#b2b5be">
              <path d="M1.500 3L4 5.300 6.500 3" />
            </svg>
          </ToolbarButton>
          <ToolbarButton $gap={14} aria-label="Chart type">
            <svg width={12} height={14} viewBox="0 0 12 14" fill="none" stroke="#b2b5be">
              <path d="M1.500 3h3v8.500h-3zM3 .5V3M3 11.500V14M8.500 5.500h2.500v4H8.500zM9.700 3v2.500M9.700 9.500V12" />
            </svg>
          </ToolbarButton>
          <ToolbarButton>
            <svg width={12} height={14} viewBox="0 0 12 14" fill="none" stroke="#b2b5be">
              <path d="M7.500 2.500c-1.500-1.300-2.800-.5-3 1.300L3.800 10c-.2 2-1.600 2.300-2.800 1.500M2 6h5M7 8.500l3.500 4M10.500 8.500L7 12.500" />
            </svg>
            Indicators
          </ToolbarButton>
          <FullscreenButton aria-label="Fullscreen">
            <svg width={13} height={13} viewBox="0 0 13 13" fill="none" stroke="#b2b5be">
              <path d="M1.500 4.500v-3h3M1.500 1.500L4.500 4.500M8.500 1.500h3v3M11.500 1.500L8.500 4.500M1.500 8.500v3h3M1.500 11.500L4.500 8.500M11.500 8.500v3h-3M11.500 11.500L8.500 8.500" />
            </svg>
          </FullscreenButton>
        </ChartToolbar>
        <PlotArea>
          <Plot spec={s} />
          <Legend $top={t0}>
            <LegendTitle>
              {s.symbol} <Dot>·</Dot> 1 <Dot>·</Dot> KTX
            </LegendTitle>
            {s.ohlc.map(([k, v]) => (
              <Value key={k} $color="#d6484a">
                <LegendName>{k}</LegendName>
                {v}
              </Value>
            ))}
            <Value $color="#d6484a">{s.change}</Value>
          </Legend>
          <Legend $top={t1}>
            <span><LegendName>BB</LegendName> 20 2</span>
            <ValueRow>
              <Value $color="#e8690b">{s.bb[0]}</Value>
              <Value $color={c.blue}>{s.bb[1]}</Value>
              <Value $color={c.blue}>{s.bb[2]}</Value>
            </ValueRow>
          </Legend>
          <Legend $top={t2}>
            <span><LegendName>Volume</LegendName> SMA 9</span>
            <ValueRow>
              <Value $color="#f7525f">{s.vol}</Value>
            </ValueRow>
          </Legend>
          <Legend $top={t3}>
            <span><LegendName>MACD</LegendName> 12 26 close 9</span>
            <ValueRow>
              <Value as="b" $color="#b2dfdb">{s.macdValues[0]}</Value>
              <Value $color={c.blue}>{s.macdValues[1]}</Value>
              <Value $color="#e8690b">{s.macdValues[2]}</Value>
            </ValueRow>
          </Legend>
          <TvBadge $top={s.height - 26}>
            <svg width={15} height={8} viewBox="0 0 15 9" fill="#fff" aria-label="TradingView">
              <path d="M0 0h6v9H3V3.500H0zM11.500 0H15l-3.500 9H8z" />
              <circle cx={8.300} cy={1.700} r={1.700} />
            </svg>
          </TvBadge>
          <Legend $top={t4}>
            <span><LegendName>RSI</LegendName> 14 SMA 14</span>
            <ValueRow>
              <Value $color={c.purple}>{s.rsiValue}</Value>
            </ValueRow>
          </Legend>
          <Collapse aria-label="Hide drawing toolbar">‹</Collapse>
        </PlotArea>
        <AxisArea $width={active ? 39 : 43}>
          <PriceAxis spec={s} />
        </AxisArea>
        <TimeArea>
          <TimeAxis spec={s} />
        </TimeArea>
        <Corner>
          <svg width={12} height={12} viewBox="0 0 12 12" fill="none" stroke="#85868c">
            <circle cx={6} cy={6} r={3.600} />
            <path d="M6 .5v2M6 9.500v2M.5 6h2M9.500 6h2M2.100 2.100l1.400 1.400M8.500 8.500l1.400 1.400M2.100 9.900l1.400-1.400M8.500 3.500l1.400-1.400" />
          </svg>
        </Corner>
      </ChartMain>
    </ChartPanel>
  );
};

const navItems: { label: string; menu?: boolean; active?: boolean }[] = [
  { label: 'Trade', active: true },
  { label: 'Earn', menu: true },
  { label: 'Portfolio' },
  { label: 'Referrals' },
  { label: 'Rewards' },
  { label: 'Stats' },
  { label: 'Ecosystem', menu: true },
];

const columns: [string, number?][] = [
  ['Symbol', 11.1],
  ['Net Value', 12.9],
  ['Size', 8.3],
  ['Entry Price', 13.5],
  ['Mark Price', 13.6],
  ['Liq. Price', 12.2],
  ['Collateral', 12.7],
  ['Close Positions'],
];

const summary: { label: string; value: string; dotted?: boolean; accent?: boolean }[] = [
  { label: 'Size', value: '$1,104.79' },
  { label: 'Collateral In', value: 'USD', dotted: true },
  { label: 'Leverage', value: '100.00x' },
  { label: 'Entry Price', value: '$613.64' },
  { label: 'Liq. Price', value: '$611.53', accent: true },
  { label: 'Fees', value: '$0.11', dotted: true },
  { label: 'Borrowing APR', value: '10.9%' },
];

const AppHeader = () => (
  <Header>
    <svg width={15} height={16} viewBox="0 0 15 16" fill="none" stroke={c.cyan} strokeWidth={2} aria-label="KTX">
      <path d="M2 4.800V14L14 1M8 8l6 6.700" />
      <circle cx={2} cy={1.700} r={1.100} fill={c.cyan} stroke="none" />
    </svg>
    <Nav>
      {navItems.map((n) => (
        <NavLink key={n.label} href="#" $active={n.active} $menu={n.menu}>
          {n.label}
          {n.menu && <Caret />}
        </NavLink>
      ))}
    </Nav>
    <HeaderTools>
      <Chip>
        <svg width={17} height={17} viewBox="0 0 17 17" aria-hidden="true">
          <circle cx={8.500} cy={8.500} r={8} fill="#03161a" stroke="#1f8b96" />
          <text x={8.500} y={10.500} textAnchor="middle" fontSize={6} fontWeight={700} fill={c.cyan}>KTC</text>
        </svg>
        $0.917
        <svg width={14} height={13} viewBox="0 0 14 13" fill="none" stroke={c.nav} aria-hidden="true">
          <path d="M.5 1.500h2l2 7.500h7.500M3.200 3.500h9.800l-1 4H4.200" />
          <circle cx={5.500} cy={11} r={1} />
          <circle cx={11} cy={11} r={1} />
        </svg>
      </Chip>
      <Chip>
        <Coin kind="bnb" size={17} />
        BNB Chain
        <Caret />
      </Chip>
      <Chip $muted>
        <svg width={14} height={14} viewBox="0 0 14 14" aria-hidden="true">
          <circle cx={7} cy={7} r={7} fill="#f97d0b" />
          <path d="M7 0a7 7 0 00-4 12.700L9 13.700C5 10 4 4 7 0z" fill="#f1500a" />
        </svg>
        0xea54...A814
        <Caret />
      </Chip>
      <GlobeButton aria-label="Language">
        <svg width={14} height={14} viewBox="0 0 14 14" fill="none" stroke={c.nav}>
          <circle cx={7} cy={7} r={6.300} />
          <ellipse cx={7} cy={7} rx={3} ry={6.300} />
          <path d="M.7 7h12.600M7 .7v12.600M1.700 4h10.600M1.700 10h10.600" strokeOpacity={0.7} />
        </svg>
      </GlobeButton>
      <IconButton aria-label="More">
        <svg width={10} height={2} viewBox="0 0 10 2" fill={c.nav}>
          <path d="M0 0h2v2H0zM4 0h2v2H4zM8 0h2v2H8z" />
        </svg>
      </IconButton>
    </HeaderTools>
  </Header>
);

const MarketBar = () => (
  <Panel>
    <TickerRow>
      <Ticker href="#"><Coin kind="btc" size={14} />BTC/USD <Price $down>69425.39</Price></Ticker>
      <Ticker href="#"><Coin kind="eth" size={14} />ETH/USD <Price>3761.38</Price></Ticker>
      <Ticker href="#"><Coin kind="bnb" size={14} />BNB/USD <Price>613.64</Price></Ticker>
      <Pyth>
        <svg width={10} height={12} viewBox="0 0 10 12" fill="none" stroke="#d6cfe6">
          <path d="M5 11.500V4.500M5 4.500c0-1.400 2.300-1.400 2.300.2S5 6.500 5 6.500M5 8.500c5.500 0 5.500-7.500.3-7.500C2.500 1 1 3 1 5v2M3 9.500V5c0-1.500 1-2.200 2-2.200" />
        </svg>
        PYTH
      </Pyth>
    </TickerRow>
    <MarketRow>
      <Pair>
        <Coin kind="bnb" size={17} />
        <PairName>BNB / USD</PairName>
        <Caret size={9} />
      </Pair>
      <LastPrice>613.64</LastPrice>
      <Stat $width={60}><StatValue $down>-1.31%</StatValue>24H Change</Stat>
      <Stat $width={71}><StatValue>8.1K / 84.3K</StatValue>Open Interest(L)</Stat>
      <Stat $width={60}><StatValue>52 / 278.1K</StatValue>Open Interest(S)</Stat>
      <LayoutButton aria-label="Layout">
        <svg width={12} height={12} viewBox="0 0 12 12" fill="none" stroke="#e4e4e4" strokeWidth={1.300}>
          <rect x={1} y={1} width={3.700} height={3.700} rx={1} />
          <rect x={7.300} y={1} width={3.700} height={3.700} rx={1} />
          <rect x={1} y={7.300} width={3.700} height={3.700} rx={1} />
          <rect x={7.300} y={7.300} width={3.700} height={3.700} rx={1} />
        </svg>
      </LayoutButton>
    </MarketRow>
  </Panel>
);

const Positions = () => (
  <PositionsPanel>
    <TabBar $gap={17}>
      <Tab $tall $active>Positions (0)</Tab>
      <Tab $tall>Orders (0)</Tab>
      <Tab $tall>Trade History (all 0)</Tab>
      <Tab $tall>Swaps (2)</Tab>
    </TabBar>
    <Table>
      <thead>
        <tr>
          {columns.map(([name, w]) => (
            <Th key={name} $w={w}>{name}</Th>
          ))}
        </tr>
      </thead>
    </Table>
  </PositionsPanel>
);

const OrderForm = () => {
  const [pct, setPct] = useState(37);
  const [lev, setLev] = useState(100);
  const [amount, setAmount] = useState('0.01818392');
  return (
    <OrderPanel>
      <Sides>
        <Side $active>Long</Side>
        <Side>Short</Side>
        <Side>Swap</Side>
      </Sides>
      <OrderTabs>
        <TabBar $gap={17}>
          <Tab $active>Market</Tab>
          <Tab>Limit</Tab>
        </TabBar>
      </OrderTabs>
      <Row>
        <label htmlFor="collateral">Collateral</label>
        <span>Balance</span>
      </Row>
      <Row>
        <span><White>11.15 USD</White> ({pct}%)</span>
        <White>0.0531</White>
      </Row>
      <Box>
        <AmountRow>
          <AmountInput id="collateral" value={amount} onChange={(e) => setAmount(e.target.value)} />
          <TokenPicker>
            <Coin kind="bnb" size={10} />
            <TokenSelect aria-label="Collateral token">
              <option>BNB</option>
            </TokenSelect>
            <Caret />
          </TokenPicker>
        </AmountRow>
        <Range type="range" aria-label="Collateral share" $fill={pct} value={pct} onChange={(e) => setPct(+e.target.value)} />
        <Ticks><span>0%</span><span>25%</span><span>50%</span><span>75%</span><span>100%</span></Ticks>
      </Box>
      <PriceLabel><label htmlFor="price">Price</label></PriceLabel>
      <PriceRow>
        <PriceInput id="price" defaultValue="613.64" />
        <span>USD</span>
      </PriceRow>
      <LeverageRow>
        <label htmlFor="leverage">Leverage:</label>
        <LeverageBox>
          <LeverageInput id="leverage" value={lev} onChange={(e) => setLev(Number(e.target.value) || 2)} />
          x
        </LeverageBox>
      </LeverageRow>
      <LeverageSlider>
        <LeverageRange type="range" aria-label="Leverage" min={2} max={100} $fill={lev} value={lev} onChange={(e) => setLev(+e.target.value)} />
        <Ticks><span>2x</span><span>25x</span><span>50x</span><span>75x</span><span>100x</span></Ticks>
      </LeverageSlider>
      <Submit>Enable Leverage</Submit>
      <SummaryHead>
        <span>Order Summary</span>
        <White>BNB / USDT</White>
      </SummaryHead>
      {summary.map((r) => (
        <SummaryRow key={r.label} $accent={r.accent}>
          <span>{r.label}</span>
          <White $dotted={r.dotted}>{r.value}</White>
        </SummaryRow>
      ))}
    </OrderPanel>
  );
};

export default function App() {
  return (
    <Page>
      <GlobalStyle />
      <Shell>
        <AppHeader />
        <Body>
          <Column>
            <MarketBar />
            <Charts>
              <Chart spec={bnb} active />
              <Chart spec={eth} />
            </Charts>
            <Positions />
          </Column>
          <OrderForm />
        </Body>
      </Shell>
    </Page>
  );
}
